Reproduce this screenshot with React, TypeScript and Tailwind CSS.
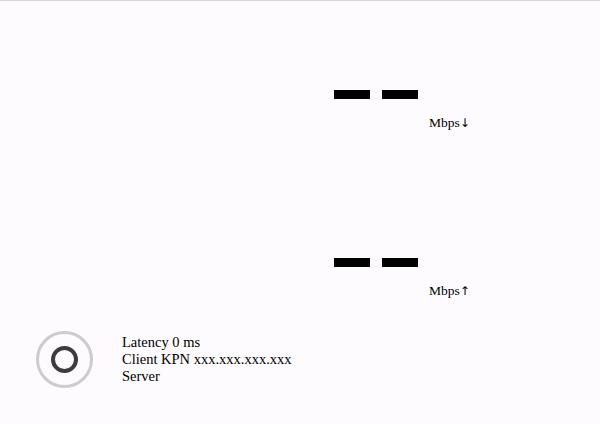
import { Fragment } from "react";

const stats = [
  { key: "down", arrow: "↓", gap: "mt-[89px]" },
  { key: "up", arrow: "↑", gap: "mt-[127px]" },
];

export default function App() {
  return (
    <div className="w-[600px] h-[424px] overflow-hidden bg-[#fdfbfe] border-t border-[#d6d6d6] text-black font-['Liberation_Serif','Times_New_Roman',serif]">
      {stats.map((s) => (
        <Fragment key={s.key}>
          <div className={`${s.gap} ml-[334px] w-[140px]`}>
            {/* empty value placeholder */}
            <div className="flex gap-[12px]" aria-label="--">
              <span className="block w-[36px] h-[9px] bg-black" />
              <span className="block w-[36px] h-[9px] bg-black" />
            </div>
            <p className="mt-[16px] pl-[95px] text-[13.5px] leading-[16px] whitespace-nowrap">
              Mbps<span className="font-['DejaVu_Sans',sans-serif] text-[12px]">{s.arrow}</span>
            </p>
          </div>
        </Fragment>
      ))}

      <div className="mt-[32px] ml-[36px] flex items-center gap-[29px]">
        <div className="w-[57px] h-[57px] rounded-full border-[3px] border-[#cccccc] flex items-center justify-center">
          <div className="w-[27px] h-[27px] rounded-full border-[4px] border-[#3c3c3c]" />
        </div>
        <div className="text-[14.5px] leading-[17px]">
          <p>Latency 0 ms</p>
          <p>Client KPN xxx.xxx.xxx.xxx</p>
          <p>Server</p>
        </div>
      </div>
    </div>
  );
}
